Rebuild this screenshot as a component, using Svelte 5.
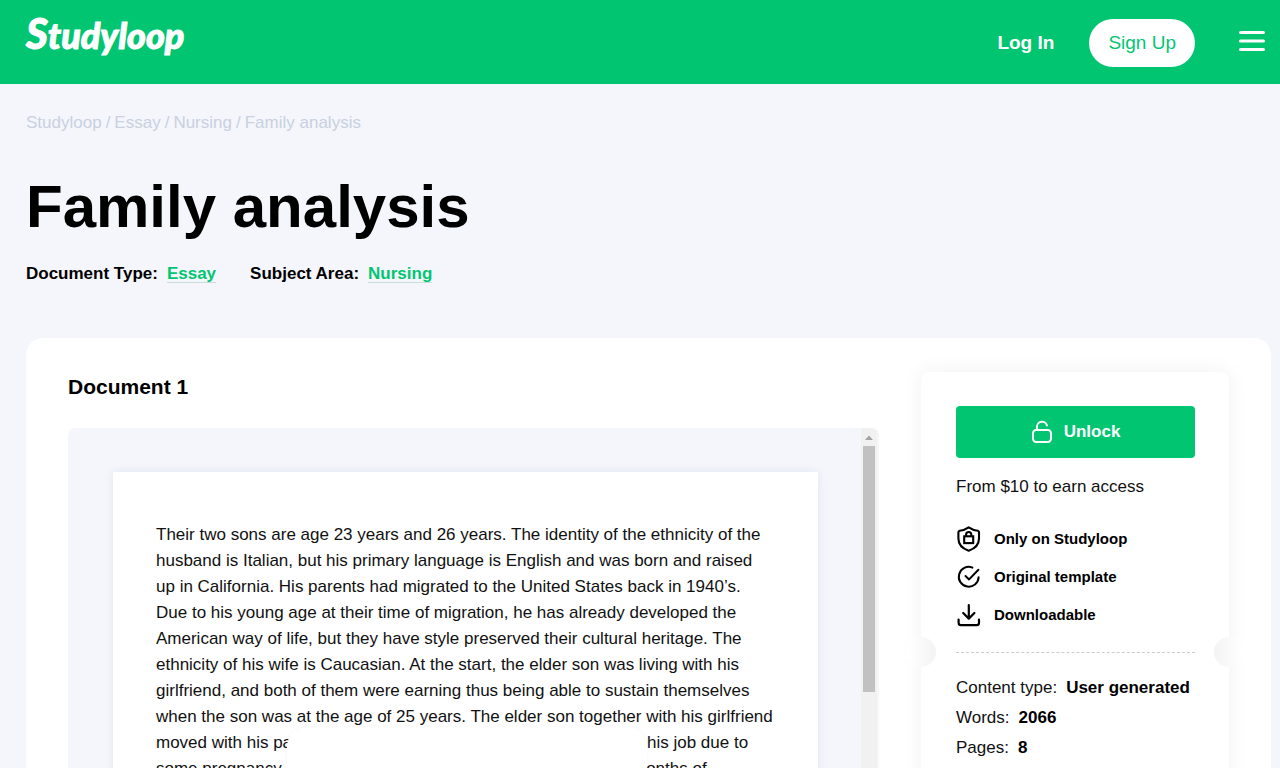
<script>
  const crumbs = ['Studyloop', 'Essay', 'Nursing'];
  const meta = [
    { label: 'Document Type:', value: 'Essay' },
    { label: 'Subject Area:', value: 'Nursing' }
  ];
  const lines = [
    'Their two sons are age 23 years and 26 years. The identity of the ethnicity of the',
    'husband is Italian, but his primary language is English and was born and raised',
    'up in California. His parents had migrated to the United States back in 1940’s.',
    'Due to his young age at their time of migration, he has already developed the',
    'American way of life, but they have style preserved their cultural heritage. The',
    'ethnicity of his wife is Caucasian. At the start, the elder son was living with his',
    'girlfriend, and both of them were earning thus being able to sustain themselves',
    'when the son was at the age of 25 years. The elder son together with his girlfriend'
  ];
  const facts = [
    { label: 'Content type:', value: 'User generated' },
    { label: 'Words:', value: '2066' },
    { label: 'Pages:', value: '8' }
  ];
</script>

<header>
  <a class="logo" href="#home">Studyloop</a>
  <nav aria-label="Account">
    <a class="login" href="#login">Log In</a>
    <a class="signup" href="#signup">Sign Up</a>
    <button class="menu" type="button" aria-label="Menu">
      <svg width="26" height="22" viewBox="0 0 26 22" fill="none" stroke="#fff" stroke-width="3" stroke-linecap="round">
        <path d="M1.5 2.5h23M1.5 11h23M1.5 19.5h23" />
      </svg>
    </button>
  </nav>
</header>

<main>
  <nav class="crumbs" aria-label="Breadcrumb">
    {#each crumbs as crumb}<a href="#{crumb}">{crumb}</a><span>/</span>{/each}<span>Family analysis</span>
  </nav>
  <h1>Family analysis</h1>
  <div class="meta">
    {#each meta as item}
      <div class="pair"><span>{item.label}</span><a href="#{item.value}">{item.value}</a></div>
    {/each}
  </div>

  <div class="card">
    <section class="document">
      <h2>Document 1</h2>
      <div class="viewer">
        <div class="canvas">
          <article class="sheet">
            {#each lines as line}<p>{line}</p>{/each}
            <p class="covered"><span class="before">moved with his partner</span><span>his job due to</span></p>
            <p class="covered"><span class="before short">some pregnancy</span><span>months of</span></p>
          </article>
        </div>
        <div class="scrollbar" aria-hidden="true">
          <svg width="16" height="18" viewBox="0 0 16 18"><path d="M4 12l4-4.5 4 4.5z" fill="#a3a3a3" /></svg>
          <div class="thumb"></div>
        </div>
        <div class="popup"></div>
      </div>
    </section>

    <aside>
      <button class="unlock" type="button">
        <svg width="22" height="24" viewBox="0 0 22 24" fill="none" stroke="#fff" stroke-width="2" stroke-linecap="round">
          <rect x="2" y="10" width="18" height="12" rx="3.2" />
          <path d="M6 10V7a5.1 5.1 0 0 1 10-1.6" />
        </svg>
        Unlock
      </button>
      <div class="price">From $10 to earn access</div>
      <ul>
        <li>
          <svg width="26" height="26" viewBox="0 0 26 26" fill="none" stroke="#000" stroke-width="2.1" stroke-linecap="round" stroke-linejoin="round">
            <path d="M12.7 1.3C9.8 3.3 6.7 4.3 3.6 4.7Q2.4 5 2.4 6.2V12.6C2.4 18.3 6.4 22.7 12.7 24.8C19 22.7 23 18.3 23 12.6V6.2Q23 5 21.8 4.7C18.7 4.3 15.6 3.3 12.7 1.3Z" />
            <rect x="8.2" y="10.3" width="9" height="6.8" stroke-linejoin="miter" />
            <path d="M10.1 10V8.6a2.6 2.6 0 0 1 5.2 0V10" />
          </svg>
          Only on Studyloop
        </li>
        <li>
          <svg width="26" height="26" viewBox="0 0 26 26" fill="none" stroke="#000" stroke-width="2" stroke-linecap="round" stroke-linejoin="round">
            <path d="M16.4 3.6A9.9 9.9 0 1 0 22.6 13.2" />
            <path d="M9.5 12l3.6 3.4L22.4 5.8" />
          </svg>
          Original template
        </li>
        <li>
          <svg width="26" height="26" viewBox="0 0 26 26" fill="none" stroke="#000" stroke-width="2.2" stroke-linecap="round" stroke-linejoin="round">
            <path d="M12.8 3v13.2M7.2 11l5.6 5.6 5.6-5.6" />
            <path d="M2.6 17.6v3.2q0 2.4 2.4 2.4h15.6q2.4 0 2.4-2.4v-3.2" />
          </svg>
          Downloadable
        </li>
      </ul>
      <div class="tear"></div>
      <dl>
        {#each facts as fact}
          <div class="pair"><dt>{fact.label}</dt><dd>{fact.value}</dd></div>
        {/each}
      </dl>
    </aside>
  </div>
</main>

<style>
  :global(body) {
    background: #f4f6fc;
    color: #000;
    font: 17px/24px 'Liberation Sans', Arial, sans-serif;
  }
  h1, h2, p, ul, dl, dd { margin: 0; padding: 0; }
  a { text-decoration: none; }
  button { border: 0; padding: 0; font: inherit; cursor: pointer; }
  svg { display: block; flex: none; }

  header {
    display: flex;
    align-items: center;
    justify-content: space-between;
    height: 84px;
    padding: 0 15px 0 26px;
    background: #02c572;
  }
  .logo {
    display: block;
    padding-bottom: 16px;
    color: #fff;
    font: italic 900 36px/44px Lato, sans-serif;
    -webkit-text-stroke: 1px #fff;
  }
  .logo::first-letter { font-size: 42px; }
  header nav { display: flex; align-items: center; padding-top: 2px; font-size: 19px; }
  .login { margin-right: 35px; color: #fff; font-weight: 700; }
  .signup {
    margin-right: 44px;
    padding: 12px 19px;
    border-radius: 24px;
    background: #fff;
    color: #02c572;
  }
  .menu { background: none; padding-bottom: 5px; }

  main { padding: 26px 9px 60px 26px; }
  .crumbs { display: flex; gap: 4px; padding-top: 1px; }
  .crumbs, .crumbs a { color: #c9d0e0; }
  h1 { margin-top: 36px; font-size: 60px; line-height: 72px; }
  .meta { display: flex; gap: 34px; margin-top: 19px; font-weight: 700; }
  .pair { display: flex; gap: 9px; }
  .meta a { height: 20px; border-bottom: 1px solid #c8dcd8; color: #02c572; }

  .card {
    display: grid;
    grid-template-columns: minmax(0, 1fr) 308px;
    align-items: start;
    gap: 42px;
    margin-top: 52px;
    padding: 34px 42px 42px;
    border-radius: 17px;
    background: #fff;
  }
  h2 { font-size: 21px; line-height: 30px; }
  .viewer {
    position: relative;
    display: flex;
    margin-top: 26px;
    border-radius: 8px;
    overflow: hidden;
    background: #f4f6fc;
  }
  .canvas { flex: 1; min-width: 0; padding: 44px 43px 44px 45px; }
  .sheet {
    padding: 50px 43px 120px;
    background: #fff;
    box-shadow: 0 0 9px rgba(30, 40, 90, 0.08);
    color: #111;
  }
  .sheet p { line-height: 26px; white-space: nowrap; }
  .covered { display: flex; }
  .before { flex: none; width: 491px; }
  .short { width: 476px; }
  .scrollbar {
    width: 16px;
    border-right: 2px solid #f6f6f7;
    background: #f1f1f1;
  }
  .thumb { height: 246px; margin: 0 2px; background: #c1c1c1; }
  .popup {
    position: absolute;
    top: 299px;
    bottom: 0;
    left: 219px;
    width: 360px;
    border-radius: 20px;
    background: #fff;
    box-shadow: 0 0 4px rgba(0, 0, 0, 0.04);
  }

  aside {
    padding: 34px 34px 40px 35px;
    border-radius: 8px;
    background: #fff;
    box-shadow: 0 0 22px rgba(0, 0, 0, 0.06);
  }
  .unlock {
    display: flex;
    align-items: center;
    justify-content: center;
    gap: 11px;
    width: 100%;
    height: 52px;
    border-radius: 4px;
    background: #02c572;
    color: #fff;
    font-weight: 700;
  }
  .price { margin-top: 17px; color: #111; }
  ul {
    display: grid;
    gap: 12px;
    margin-top: 27px;
    list-style: none;
    font-size: 15px;
    font-weight: 700;
  }
  li { display: flex; align-items: center; gap: 12px; }
  .tear {
    position: relative;
    margin-top: 24px;
    border-top: 1px dashed #ccc;
  }
  .tear::before,
  .tear::after {
    content: '';
    position: absolute;
    top: -16px;
    left: -50px;
    width: 30px;
    height: 30px;
    border-radius: 50%;
    background: linear-gradient(to right, #fff 10%, #f3f3f3);
  }
  .tear::after {
    right: -49px;
    left: auto;
    background: linear-gradient(to left, #fff 10%, #f3f3f3);
  }
  dl { margin-top: 20px; line-height: 30px; color: #111; }
  dd { color: #000; font-weight: 700; }
</style>
